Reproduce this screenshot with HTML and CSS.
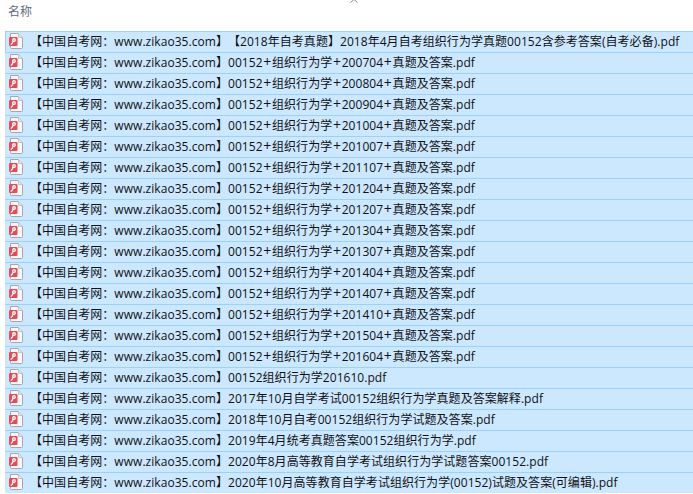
FILE: index.html
```html
<!DOCTYPE html>
<html lang="zh-CN">
<head>
<meta charset="utf-8">
<title>名称</title>
<link rel="stylesheet" href="styles.css">
</head>
<body>
<svg width="0" height="0" class="defs"><defs>
<symbol id="pdf" viewBox="0 0 16 16">
<path d="M1.5.5H9.5L13.5 4.5V14.5Q13.5 15.5 12.5 15.5H2.5Q1.5 15.5 1.5 14.5Z" fill="#f8f8f8" stroke="#a6a6a6"/>
<path d="M9.5.5V4.5H13.5" fill="#e6e6e6" stroke="#c4c4c4"/>
<rect x="0" y="4" width="8.5" height="9" rx="1.2" fill="#ea4a55"/>
<path d="M1.8 11.6L3.8 9.5M3.8 9.5V6.7Q3.8 5.6 5 5.6Q6.3 5.6 6.3 7Q6.3 8.3 5 8.3H3.8" fill="none" stroke="#fff" stroke-width="1.3"/>
</symbol>
</defs></svg>
<div class="explorer">
<div class="sort-caret"><svg width="8" height="4" viewBox="0 0 8 4"><path d="M.5 3.5 4 .5 7.5 3.5" fill="none" stroke="#8a8a8a"/></svg></div>
<div class="header">名称</div>
<ul class="list">
<li class="row"><svg class="icon"><use href="#pdf"/></svg><span>【中国自考网：www.zikao35.com】【2018年自考真题】2018年4月自考组织行为学真题00152含参考答案(自考必备).pdf</span></li>
<li class="row"><svg class="icon"><use href="#pdf"/></svg><span>【中国自考网：www.zikao35.com】00152<b class="plus">+</b>组织行为学<b class="plus">+</b>200704<b class="plus">+</b>真题及答案.pdf</span></li>
<li class="row"><svg class="icon"><use href="#pdf"/></svg><span>【中国自考网：www.zikao35.com】00152<b class="plus">+</b>组织行为学<b class="plus">+</b>200804<b class="plus">+</b>真题及答案.pdf</span></li>
<li class="row"><svg class="icon"><use href="#pdf"/></svg><span>【中国自考网：www.zikao35.com】00152<b class="plus">+</b>组织行为学<b class="plus">+</b>200904<b class="plus">+</b>真题及答案.pdf</span></li>
<li class="row"><svg class="icon"><use href="#pdf"/></svg><span>【中国自考网：www.zikao35.com】00152<b class="plus">+</b>组织行为学<b class="plus">+</b>201004<b class="plus">+</b>真题及答案.pdf</span></li>
<li class="row"><svg class="icon"><use href="#pdf"/></svg><span>【中国自考网：www.zikao35.com】00152<b class="plus">+</b>组织行为学<b class="plus">+</b>201007<b class="plus">+</b>真题及答案.pdf</span></li>
<li class="row"><svg class="icon"><use href="#pdf"/></svg><span>【中国自考网：www.zikao35.com】00152<b class="plus">+</b>组织行为学<b class="plus">+</b>201107<b class="plus">+</b>真题及答案.pdf</span></li>
<li class="row"><svg class="icon"><use href="#pdf"/></svg><span>【中国自考网：www.zikao35.com】00152<b class="plus">+</b>组织行为学<b class="plus">+</b>201204<b class="plus">+</b>真题及答案.pdf</span></li>
<li class="row"><svg class="icon"><use href="#pdf"/></svg><span>【中国自考网：www.zikao35.com】00152<b class="plus">+</b>组织行为学<b class="plus">+</b>201207<b class="plus">+</b>真题及答案.pdf</span></li>
<li class="row"><svg class="icon"><use href="#pdf"/></svg><span>【中国自考网：www.zikao35.com】00152<b class="plus">+</b>组织行为学<b class="plus">+</b>201304<b class="plus">+</b>真题及答案.pdf</span></li>
<li class="row"><svg class="icon"><use href="#pdf"/></svg><span>【中国自考网：www.zikao35.com】00152<b class="plus">+</b>组织行为学<b class="plus">+</b>201307<b class="plus">+</b>真题及答案.pdf</span></li>
<li class="row"><svg class="icon"><use href="#pdf"/></svg><span>【中国自考网：www.zikao35.com】00152<b class="plus">+</b>组织行为学<b class="plus">+</b>201404<b class="plus">+</b>真题及答案.pdf</span></li>
<li class="row"><svg class="icon"><use href="#pdf"/></svg><span>【中国自考网：www.zikao35.com】00152<b class="plus">+</b>组织行为学<b class="plus">+</b>201407<b class="plus">+</b>真题及答案.pdf</span></li>
<li class="row"><svg class="icon"><use href="#pdf"/></svg><span>【中国自考网：www.zikao35.com】00152<b class="plus">+</b>组织行为学<b class="plus">+</b>201410<b class="plus">+</b>真题及答案.pdf</span></li>
<li class="row"><svg class="icon"><use href="#pdf"/></svg><span>【中国自考网：www.zikao35.com】00152<b class="plus">+</b>组织行为学<b class="plus">+</b>201504<b class="plus">+</b>真题及答案.pdf</span></li>
<li class="row"><svg class="icon"><use href="#pdf"/></svg><span>【中国自考网：www.zikao35.com】00152<b class="plus">+</b>组织行为学<b class="plus">+</b>201604<b class="plus">+</b>真题及答案.pdf</span></li>
<li class="row"><svg class="icon"><use href="#pdf"/></svg><span>【中国自考网：www.zikao35.com】00152组织行为学201610.pdf</span></li>
<li class="row"><svg class="icon"><use href="#pdf"/></svg><span>【中国自考网：www.zikao35.com】2017年10月自学考试00152组织行为学真题及答案解释.pdf</span></li>
<li class="row"><svg class="icon"><use href="#pdf"/></svg><span>【中国自考网：www.zikao35.com】2018年10月自考00152组织行为学试题及答案.pdf</span></li>
<li class="row"><svg class="icon"><use href="#pdf"/></svg><span>【中国自考网：www.zikao35.com】2019年4月统考真题答案00152组织行为学.pdf</span></li>
<li class="row"><svg class="icon"><use href="#pdf"/></svg><span>【中国自考网：www.zikao35.com】2020年8月高等教育自学考试组织行为学试题答案00152.pdf</span></li>
<li class="row"><svg class="icon"><use href="#pdf"/></svg><span>【中国自考网：www.zikao35.com】2020年10月高等教育自学考试组织行为学(00152)试题及答案(可编辑).pdf</span></li>
</ul>
</div>
</body>
</html>
```
FILE: styles.css
```css
html, body {
  margin: 0;
  padding: 0;
  background: #fff;
  overflow: hidden;
}
.defs {
  display: block;
  width: 0;
  height: 0;
}
.explorer {
  width: 693px;
  height: 494px;
  overflow: hidden;
  font-family: "Open Sans", "Noto Sans CJK SC", sans-serif;
  font-size: 12px;
  color: #111;
  position: relative;
}
.sort-caret {
  position: absolute;
  left: 350px;
  top: -1px;
  line-height: 0;
}
.header {
  height: 31px;
  box-sizing: border-box;
  padding: 4px 0 0 8px;
  line-height: 16px;
  color: #5f6b7c;
}
.list {
  list-style: none;
  margin: 0 0 0 5px;
  padding: 0;
}
.row {
  height: 21px;
  box-sizing: border-box;
  display: flex;
  align-items: center;
  padding-bottom: 2px;
  background: #cce8ff;
  border-top: 1px solid #99d1ff;
  white-space: nowrap;
  letter-spacing: 0.05px;
  text-spacing-trim: space-all;
}
.row:first-child {
  box-shadow: inset 1px 0 #99d1ff;
}
.icon {
  width: 16px;
  height: 16px;
  margin-left: 4px;
  margin-right: 5px;
  flex: none;
}
.plus {
  font-size: 14px;
  font-weight: 400;
  line-height: 1;
  padding: 0 0.7px;
}
```
